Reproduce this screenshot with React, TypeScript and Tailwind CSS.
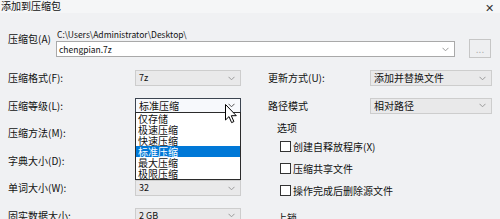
import React from "react";

const Chevron = ({ color = "#9a9a9a" }: { color?: string }) => (
  <svg width="7" height="5" viewBox="0 0 7 5" className="shrink-0">
    <path d="M0.5 0.8 L3.5 3.8 L6.5 0.8" fill="none" stroke={color} strokeWidth="1" />
  </svg>
);

function Combo({ value, width, focused, latin }: { value: string; width: string; focused?: boolean; latin?: boolean }) {
  return (
    <div
      className={
        "h-[16px] flex items-center justify-between pl-[3px] pr-[5px] border " +
        width +
        (focused ? " border-[#3c4450] bg-[#f7f9fc]" : " border-[#cdcdcd] bg-[#e9e9ea]")
      }
    >
      <span className={"leading-[14px] whitespace-nowrap " + (latin ? "text-[9px]" : "")}>{value}</span>
      <Chevron color={focused ? "#555" : "#9a9a9a"} />
    </div>
  );
}

function LeftRow({ label, value, focused, latin }: { label: string; value: string; focused?: boolean; latin?: boolean }) {
  return (
    <div className="flex items-center h-[16px]">
      <span className="w-[127px] whitespace-nowrap leading-[14px]">{label}</span>
      <Combo value={value} width="w-[106px]" focused={focused} latin={latin} />
    </div>
  );
}

function RightRow({ label, value }: { label: string; value: string }) {
  return (
    <div className="flex items-center h-[16px]">
      <span className="w-[102px] whitespace-nowrap leading-[14px]">{label}</span>
      <Combo value={value} width="w-[122px]" />
    </div>
  );
}

function Check({ label }: { label: string }) {
  return (
    <div className="flex items-center h-[14px] gap-[2px]">
      <div className="w-[11px] h-[11px] border border-[#333] bg-white shrink-0" />
      <span className="leading-[14px] whitespace-nowrap">{label}</span>
    </div>
  );
}

export default function App() {
  const items = ["仅存储", "极速压缩", "快速压缩", "标准压缩", "最大压缩", "极限压缩"];
  return (
    <div className="w-[500px] h-[219px] overflow-hidden relative bg-[#f0f1f3] text-[10px] text-[#111] font-['Noto_Sans_CJK_SC','Noto_Sans',sans-serif]">
      {/* title bar */}
      <div className="flex justify-between items-start h-[13px] bg-[#f5f6f7]">
        <span className="pl-[1px] leading-[11px]">添加到压缩包</span>
        <span className="mr-[6px] mt-[1px] text-[11px] leading-[12px] text-[#333]">✕</span>
      </div>

      {/* archive path */}
      <div className="flex mt-[15px]">
        <div className="w-[56px] pl-[8px] pt-[5px] leading-[12px] whitespace-nowrap">压缩包(A)</div>
        <div className="flex flex-col">
          <div className="h-[13px] leading-[12px] pl-[1px] whitespace-nowrap text-[8.5px]">C:\Users\Administrator\Desktop\</div>
          <div className="flex items-start">
            <div className="w-[399px] h-[16px] border border-[#a9a9a9] bg-white flex items-center justify-between pl-[2px] pr-[5px]">
              <span className="leading-[14px] text-[8.5px]">chengpian.7z</span>
              <Chevron />
            </div>
            <div className="ml-[14px] mt-[-2px] w-[22px] h-[19px] border border-[#c6c6c6] bg-[#eeeff1] flex items-center justify-center text-[#b0b0b0] leading-[10px]">
              ...
            </div>
          </div>
        </div>
      </div>

      {/* main grid */}
      <div className="flex mt-[12px]">
        <div className="w-[241px] pl-[8px] flex flex-col gap-[11.5px]">
          <LeftRow label="压缩格式(F):" value="7z" latin />
          <LeftRow label="压缩等级(L):" value="标准压缩" focused />
          <LeftRow label="压缩方法(M):" value="" />
          <LeftRow label="字典大小(D):" value="" />
          <LeftRow label="单词大小(W):" value="32" latin />
          <LeftRow label="固实数据大小:" value="2 GB" latin />
        </div>
        <div className="ml-[27px] flex flex-col">
          <div className="flex flex-col gap-[11.5px]">
            <RightRow label="更新方式(U):" value="添加并替换文件" />
            <RightRow label="路径模式" value="相对路径" />
          </div>
          <div className="mt-[8px] pl-[9px] leading-[12px]">选项</div>
          <div className="mt-[6px] pl-[12px] flex flex-col gap-[8px]">
            <Check label="创建自释放程序(X)" />
            <Check label="压缩共享文件" />
            <Check label="操作完成后删除源文件" />
          </div>
          <div className="mt-[14px] pl-[9px] leading-[12px]">上锁</div>
        </div>
      </div>

      {/* open dropdown list */}
      <div className="absolute left-[135px] top-[112px] w-[106px] border border-[#2b2b2b] bg-white flex flex-col">
        {items.map((it, i) => (
          <div
            key={it}
            className={
              "h-[11px] leading-[11px] pl-[2px] whitespace-nowrap " +
              (i === 3 ? "bg-[#0078d7] text-white" : "")
            }
          >
            {it}
          </div>
        ))}
      </div>

      {/* mouse cursor */}
      <svg className="absolute left-[225px] top-[104px]" width="13" height="20" viewBox="0 0 13 20">
        <path
          d="M0.5 0.5 L0.5 16 L4 12.6 L6.6 18.6 L8.9 17.6 L6.3 11.7 L11.3 11.7 Z"
          fill="#fff"
          stroke="#000"
          strokeWidth="1"
          strokeLinejoin="miter"
        />
      </svg>
    </div>
  );
}
